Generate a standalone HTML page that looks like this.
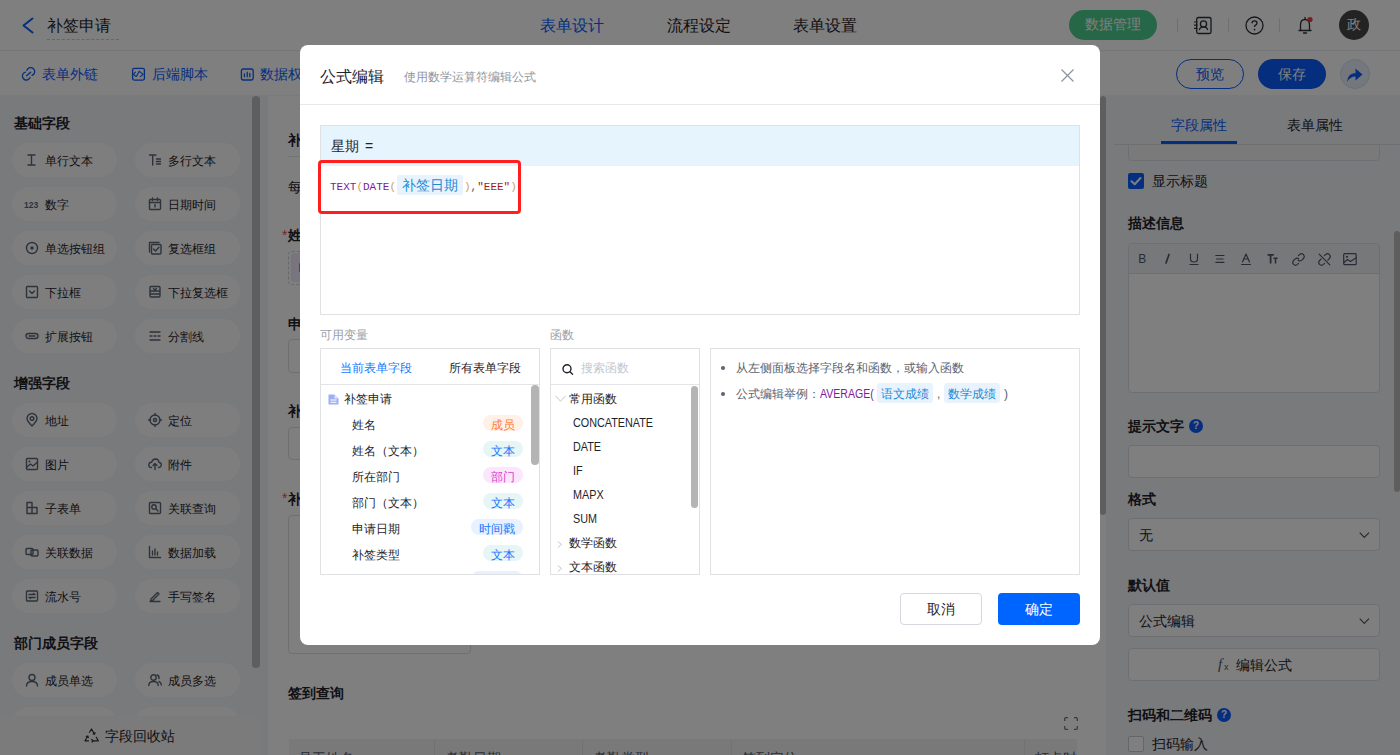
<!DOCTYPE html>
<html><head><meta charset="utf-8">
<style>
*{box-sizing:border-box;margin:0;padding:0}
html,body{width:1400px;height:755px;overflow:hidden;font-family:"Liberation Sans",sans-serif;color:#1f2329;background:#fff}
.a{position:absolute}
.t{position:absolute;white-space:nowrap}
.f12{font-size:12px;line-height:12px}
.f14{font-size:14px;line-height:14px}
.f16{font-size:16px;line-height:16px}
.b{font-weight:bold}
svg{position:absolute;overflow:visible}
.pill{position:absolute;width:105px;height:34px;border-radius:17px;background:#fdfdfe}
.pill .t{left:33px;top:12px;font-size:12px;line-height:12px;color:#1f2329}
.pill svg{left:12px;top:10px}
</style></head><body>
<!-- HEADER -->
<div class="a" style="left:0;top:0;width:1400px;height:51px;background:#fff;border-bottom:1px solid #e6e8eb"></div>
<svg style="left:0;top:0" width="40" height="50"><path d="M32.5 18.5 L23.5 25.5 L32.5 32.5" fill="none" stroke="#0a5cff" stroke-width="2" stroke-linecap="round" stroke-linejoin="round"/></svg>
<div class="t f16" style="left:47px;top:18px;color:#1f2329">补签申请</div>
<div class="a" style="left:47px;top:39px;width:72px;border-top:1px dashed #c9cdd4"></div>
<div class="t f16" style="left:540px;top:18px;color:#0a5cff">表单设计</div>
<div class="t f16" style="left:667px;top:18px">流程设定</div>
<div class="t f16" style="left:793px;top:18px">表单设置</div>
<div class="a" style="left:1069px;top:10px;width:88px;height:30px;border-radius:15px;background:#4dce8e"></div>
<div class="t f14" style="left:1085px;top:17px;color:#fff">数据管理</div>
<div class="a" style="left:1177px;top:18px;width:1px;height:14px;background:#dcdfe6"></div>
<div class="a" style="left:1228px;top:18px;width:1px;height:14px;background:#dcdfe6"></div>
<div class="a" style="left:1279px;top:18px;width:1px;height:14px;background:#dcdfe6"></div>
<!-- contacts icon -->
<svg style="left:1193px;top:16px" width="20" height="20"><rect x="3.7" y="1.5" width="14.3" height="16" rx="1.5" fill="none" stroke="#2b2f36" stroke-width="1.3"/><circle cx="10.5" cy="8" r="3.1" fill="none" stroke="#2b2f36" stroke-width="1.3"/><path d="M6.3 14.2 Q6.8 10.8 10.5 10.8 Q14.2 10.8 14.7 14.2" fill="none" stroke="#2b2f36" stroke-width="1.3"/><path d="M1 6h3.5M1 9.2h3.5M1 12.4h3.5" stroke="#2b2f36" stroke-width="1.2"/></svg>
<!-- help icon -->
<svg style="left:1245px;top:16px" width="20" height="20"><circle cx="9.5" cy="9.5" r="8.5" fill="none" stroke="#2b2f36" stroke-width="1.3"/><path d="M7 7.3 Q7 4.8 9.5 4.8 Q12 4.8 12 7 Q12 8.6 10.2 9.4 Q9.5 9.8 9.5 11" fill="none" stroke="#2b2f36" stroke-width="1.3"/><circle cx="9.5" cy="13.6" r="0.9" fill="#2b2f36"/></svg>
<!-- bell -->
<svg style="left:1296px;top:16px" width="20" height="20"><path d="M3 14.5 H15 M4.5 14.5 V9 Q4.5 3.5 9 3.5 Q13.5 3.5 13.5 9 V14.5 M7.5 17 H10.5 M9 1.5 V3.5" fill="none" stroke="#2b2f36" stroke-width="1.3" stroke-linecap="round"/><circle cx="14" cy="3.5" r="2.6" fill="#f23c3c"/></svg>
<div class="a" style="left:1339px;top:10px;width:30px;height:30px;border-radius:15px;background:#474747"></div>
<div class="t f14" style="left:1347px;top:17px;color:#fff">政</div>

<!-- TOOLBAR -->
<svg style="left:22px;top:67px" width="14" height="14"><path d="M4.9 3.4 A4 4 0 1 1 10 8.4 M8.1 10.6 A4 4 0 1 1 3.3 5.2 M4.6 8.7 L8.7 5.2" fill="none" stroke="#0a5cff" stroke-width="1.3" stroke-linecap="round"/></svg>
<div class="t f14" style="left:42px;top:67px;color:#0a5cff">表单外链</div>
<svg style="left:131px;top:67px" width="14" height="14"><rect x="1.6" y="1.3" width="11.8" height="11.8" rx="1.5" fill="none" stroke="#0a5cff" stroke-width="1.3"/><path d="M4.5 5.2 L2.3 7.4 L5.2 9.5 M5.5 9.3 L8.3 4.2 M9 4.9 L12.2 7.4 L9.3 9.6" fill="none" stroke="#0a5cff" stroke-width="1.1" stroke-linecap="round" stroke-linejoin="round"/></svg>
<div class="t f14" style="left:152px;top:67px;color:#0a5cff">后端脚本</div>
<svg style="left:240px;top:67px" width="14" height="14"><rect x="1.4" y="2" width="11.8" height="11" rx="1.8" fill="none" stroke="#0a5cff" stroke-width="1.3"/><path d="M4.4 7V9.8 M7.2 5.2V9.8 M9.8 6.4V9.8" stroke="#0a5cff" stroke-width="1.3" stroke-linecap="round"/></svg>
<div class="t f14" style="left:260px;top:67px;color:#0a5cff">数据权限</div>
<div class="a" style="left:1176px;top:59px;width:68px;height:30px;border-radius:15px;border:1px solid #0a5cff"></div>
<div class="t f14" style="left:1196px;top:67px;color:#0a5cff">预览</div>
<div class="a" style="left:1258px;top:59px;width:68px;height:30px;border-radius:15px;background:#0a5cff"></div>
<div class="t f14" style="left:1278px;top:67px;color:#fff">保存</div>
<div class="a" style="left:1340px;top:59px;width:30px;height:30px;border-radius:15px;background:#e9effc;border:1px solid #d3def5"></div>
<svg style="left:1346px;top:67px" width="18" height="16"><path d="M1 15 Q1.5 6.5 9.5 6 V1.5 L16.5 7.5 L9.5 13.5 V9.5 Q4 9.5 1 15 Z" fill="#0a5cff"/></svg>

<!-- SIDEBAR -->
<div class="a" style="left:0;top:95px;width:1400px;height:1px;background:#f3f4f6"></div>
<div class="a" style="left:0;top:96px;width:268px;height:659px;background:#f2f4f8"></div>
<div class="a" style="left:252px;top:96px;width:8px;height:572px;border-radius:4px;background:#bcbcbc"></div>
<div class="t f14 b" style="left:14px;top:116px">基础字段</div>
<div class="pill" style="left:12px;top:143px"><svg style="left:13px;top:10px" width="14" height="14"><path d="M3 2H10M3 12H10M6.5 2V12" fill="none" stroke="#5b6676" stroke-width="1.4" stroke-linecap="round" stroke-linejoin="round"/></svg><div class="t">单行文本</div></div>
<div class="pill" style="left:135px;top:143px"><svg style="left:13px;top:10px" width="14" height="14"><path d="M1.5 2H8M4.7 2V12M8.5 6H12.5M8.5 8.5H12.5M8.5 11H12.5" fill="none" stroke="#5b6676" stroke-width="1.4" stroke-linecap="round" stroke-linejoin="round"/></svg><div class="t">多行文本</div></div>
<div class="pill" style="left:12px;top:187px"><svg style="left:13px;top:10px" width="14" height="14"><text x="-1" y="10.5" font-size="8.5" font-weight="bold" fill="#5b6676" font-family="Liberation Sans">123</text></svg><div class="t">数字</div></div>
<div class="pill" style="left:135px;top:187px"><svg style="left:13px;top:10px" width="14" height="14"><rect x="1.5" y="2.5" width="11" height="10" rx="1" fill="none" stroke="#5b6676" stroke-width="1.4" stroke-linecap="round" stroke-linejoin="round"/><path d="M1.5 5.5H12.5M4.5 1V3.5M9.5 1V3.5M7 7.5V10" fill="none" stroke="#5b6676" stroke-width="1.4" stroke-linecap="round" stroke-linejoin="round"/></svg><div class="t">日期时间</div></div>
<div class="pill" style="left:12px;top:231px"><svg style="left:13px;top:10px" width="14" height="14"><circle cx="7" cy="7" r="5.5" fill="none" stroke="#5b6676" stroke-width="1.4" stroke-linecap="round" stroke-linejoin="round"/><circle cx="7" cy="7" r="1.8" fill="#5b6676"/></svg><div class="t">单选按钮组</div></div>
<div class="pill" style="left:135px;top:231px"><svg style="left:13px;top:10px" width="14" height="14"><path d="M1.5 11V1.5H11" fill="none" stroke="#5b6676" stroke-width="1.4" stroke-linecap="round" stroke-linejoin="round"/><rect x="3.5" y="3.5" width="9.5" height="9.5" rx="1" fill="none" stroke="#5b6676" stroke-width="1.4" stroke-linecap="round" stroke-linejoin="round"/><path d="M5.5 8L7.5 10L11 6.3" fill="none" stroke="#5b6676" stroke-width="1.4" stroke-linecap="round" stroke-linejoin="round"/></svg><div class="t">复选框组</div></div>
<div class="pill" style="left:12px;top:275px"><svg style="left:13px;top:10px" width="14" height="14"><rect x="1.5" y="1.5" width="11" height="11" rx="1" fill="none" stroke="#5b6676" stroke-width="1.4" stroke-linecap="round" stroke-linejoin="round"/><path d="M4.5 6L7 8.5L9.5 6" fill="none" stroke="#5b6676" stroke-width="1.4" stroke-linecap="round" stroke-linejoin="round"/></svg><div class="t">下拉框</div></div>
<div class="pill" style="left:135px;top:275px"><svg style="left:13px;top:10px" width="14" height="14"><path d="M2 6V2.5Q2 1.5 3 1.5H11Q12 1.5 12 2.5V6ZM2 6V11Q2 12 3 12H11Q12 12 12 11V6M5.5 3.5L7 5L8.5 3.5M2 9H12" fill="none" stroke="#5b6676" stroke-width="1.4" stroke-linecap="round" stroke-linejoin="round"/></svg><div class="t">下拉复选框</div></div>
<div class="pill" style="left:12px;top:319px"><svg style="left:13px;top:10px" width="14" height="14"><rect x="1" y="4.5" width="12" height="5" rx="2.5" fill="none" stroke="#5b6676" stroke-width="1.4" stroke-linecap="round" stroke-linejoin="round"/><path d="M4 7H10" fill="none" stroke="#5b6676" stroke-width="1.4" stroke-linecap="round" stroke-linejoin="round"/></svg><div class="t">扩展按钮</div></div>
<div class="pill" style="left:135px;top:319px"><svg style="left:13px;top:10px" width="14" height="14"><path d="M2 3H12M2 7H4M6 7H8M10 7H12M2 11H12" fill="none" stroke="#5b6676" stroke-width="1.4" stroke-linecap="round" stroke-linejoin="round"/></svg><div class="t">分割线</div></div>
<div class="pill" style="left:12px;top:403px"><svg style="left:13px;top:10px" width="14" height="14"><path d="M7 13Q2 8 2 5.5A5 5 0 0 1 12 5.5Q12 8 7 13Z" fill="none" stroke="#5b6676" stroke-width="1.4" stroke-linecap="round" stroke-linejoin="round"/><circle cx="7" cy="5.5" r="1.8" fill="none" stroke="#5b6676" stroke-width="1.4" stroke-linecap="round" stroke-linejoin="round"/></svg><div class="t">地址</div></div>
<div class="pill" style="left:135px;top:403px"><svg style="left:13px;top:10px" width="14" height="14"><circle cx="7" cy="7" r="5" fill="none" stroke="#5b6676" stroke-width="1.4" stroke-linecap="round" stroke-linejoin="round"/><circle cx="7" cy="7" r="1.5" fill="none" stroke="#5b6676" stroke-width="1.4" stroke-linecap="round" stroke-linejoin="round"/><path d="M7 0.5V2.5M7 11.5V13.5M0.5 7H2.5M11.5 7H13.5" fill="none" stroke="#5b6676" stroke-width="1.4" stroke-linecap="round" stroke-linejoin="round"/></svg><div class="t">定位</div></div>
<div class="pill" style="left:12px;top:447px"><svg style="left:13px;top:10px" width="14" height="14"><rect x="1.5" y="1.5" width="11" height="11" rx="1" fill="none" stroke="#5b6676" stroke-width="1.4" stroke-linecap="round" stroke-linejoin="round"/><path d="M2 10L5.5 7L8 9L12 5.5" fill="none" stroke="#5b6676" stroke-width="1.4" stroke-linecap="round" stroke-linejoin="round"/><circle cx="4.5" cy="4.5" r="1" fill="#5b6676"/></svg><div class="t">图片</div></div>
<div class="pill" style="left:135px;top:447px"><svg style="left:13px;top:10px" width="14" height="14"><path d="M3.5 10.5Q0.5 10.5 0.8 7.5Q1.2 5 3.7 5.2Q4.5 2 7.5 2Q10.8 2.2 11 5.5Q13.5 5.7 13.3 8Q13 10.5 10.5 10.5M7 6.5V12.5M5 8.5L7 6.5L9 8.5" fill="none" stroke="#5b6676" stroke-width="1.4" stroke-linecap="round" stroke-linejoin="round"/></svg><div class="t">附件</div></div>
<div class="pill" style="left:12px;top:491px"><svg style="left:13px;top:10px" width="14" height="14"><path d="M2 1.5H7V12.5H2ZM7 6.5H12V12.5H7M2 6.5H7" fill="none" stroke="#5b6676" stroke-width="1.4" stroke-linecap="round" stroke-linejoin="round"/></svg><div class="t">子表单</div></div>
<div class="pill" style="left:135px;top:491px"><svg style="left:13px;top:10px" width="14" height="14"><rect x="1.5" y="1.5" width="11" height="11" rx="1" fill="none" stroke="#5b6676" stroke-width="1.4" stroke-linecap="round" stroke-linejoin="round"/><circle cx="6" cy="6" r="2.2" fill="none" stroke="#5b6676" stroke-width="1.4" stroke-linecap="round" stroke-linejoin="round"/><path d="M7.6 7.6L10 10" fill="none" stroke="#5b6676" stroke-width="1.4" stroke-linecap="round" stroke-linejoin="round"/></svg><div class="t">关联查询</div></div>
<div class="pill" style="left:12px;top:535px"><svg style="left:13px;top:10px" width="14" height="14"><rect x="1" y="3.5" width="7" height="6" rx="1" fill="none" stroke="#5b6676" stroke-width="1.4" stroke-linecap="round" stroke-linejoin="round"/><rect x="6" y="5" width="7" height="6" rx="1" fill="none" stroke="#5b6676" stroke-width="1.4" stroke-linecap="round" stroke-linejoin="round"/></svg><div class="t">关联数据</div></div>
<div class="pill" style="left:135px;top:535px"><svg style="left:13px;top:10px" width="14" height="14"><path d="M1.5 1.5V12.5H12.5M4.5 10V6M7 10V4M9.5 10V7" fill="none" stroke="#5b6676" stroke-width="1.4" stroke-linecap="round" stroke-linejoin="round"/></svg><div class="t">数据加载</div></div>
<div class="pill" style="left:12px;top:579px"><svg style="left:13px;top:10px" width="14" height="14"><rect x="1.5" y="2" width="11" height="10" rx="1" fill="none" stroke="#5b6676" stroke-width="1.4" stroke-linecap="round" stroke-linejoin="round"/><path d="M4 5.5H10M4 8.5H10M8.5 4.5L10 5.5M5.5 9.5L4 8.5" fill="none" stroke="#5b6676" stroke-width="1.4" stroke-linecap="round" stroke-linejoin="round"/></svg><div class="t">流水号</div></div>
<div class="pill" style="left:135px;top:579px"><svg style="left:13px;top:10px" width="14" height="14"><path d="M2 12.5H12M3 10L9.5 3.5L11 5L4.5 11.5L2.7 11.8Z" fill="none" stroke="#5b6676" stroke-width="1.4" stroke-linecap="round" stroke-linejoin="round"/></svg><div class="t">手写签名</div></div>
<div class="pill" style="left:12px;top:663px"><svg style="left:13px;top:10px" width="14" height="14"><circle cx="7" cy="4.5" r="3" fill="none" stroke="#5b6676" stroke-width="1.4" stroke-linecap="round" stroke-linejoin="round"/><path d="M1.5 13Q1.5 8.5 7 8.5Q12.5 8.5 12.5 13" fill="none" stroke="#5b6676" stroke-width="1.4" stroke-linecap="round" stroke-linejoin="round"/></svg><div class="t">成员单选</div></div>
<div class="pill" style="left:135px;top:663px"><svg style="left:13px;top:10px" width="14" height="14"><circle cx="5.5" cy="4.5" r="2.7" fill="none" stroke="#5b6676" stroke-width="1.4" stroke-linecap="round" stroke-linejoin="round"/><path d="M0.8 12.5Q0.8 8.5 5.5 8.5Q10.2 8.5 10.2 12.5M9 2Q11.5 2.5 11 5.5M11 8.5Q13.3 9.5 13.3 12" fill="none" stroke="#5b6676" stroke-width="1.4" stroke-linecap="round" stroke-linejoin="round"/></svg><div class="t">成员多选</div></div>
<div class="pill" style="left:12px;top:707px"><svg style="left:13px;top:10px" width="14" height="14"><circle cx="7" cy="4.5" r="3" fill="none" stroke="#5b6676" stroke-width="1.4" stroke-linecap="round" stroke-linejoin="round"/><path d="M1.5 13Q1.5 8.5 7 8.5Q12.5 8.5 12.5 13" fill="none" stroke="#5b6676" stroke-width="1.4" stroke-linecap="round" stroke-linejoin="round"/></svg><div class="t">部门单选</div></div>
<div class="pill" style="left:135px;top:707px"><svg style="left:13px;top:10px" width="14" height="14"><circle cx="5.5" cy="4.5" r="2.7" fill="none" stroke="#5b6676" stroke-width="1.4" stroke-linecap="round" stroke-linejoin="round"/><path d="M0.8 12.5Q0.8 8.5 5.5 8.5Q10.2 8.5 10.2 12.5M9 2Q11.5 2.5 11 5.5M11 8.5Q13.3 9.5 13.3 12" fill="none" stroke="#5b6676" stroke-width="1.4" stroke-linecap="round" stroke-linejoin="round"/></svg><div class="t">部门多选</div></div>
<div class="t f14 b" style="left:14px;top:376px">增强字段</div>
<div class="t f14 b" style="left:14px;top:636px">部门成员字段</div>
<div class="a" style="left:0;top:716px;width:260px;height:39px;background:#f6f7f9"></div>
<div class="t f14" style="left:105px;top:729px;color:#1f2329">字段回收站</div>
<svg style="left:84px;top:728px" width="16" height="16"><path d="M5.5 4.2 L7.5 1 L10.6 6.2 M9.2 5.8 L10.6 6.2 L11 4.6 M9.5 12.8 H14.3 L12.2 9.2 M7.5 11.6 L9.5 12.8 L8 14 M4.5 12.8 H1 L3.8 8 M2.3 8.4 L3.8 8 L4.3 9.6" fill="none" stroke="#2b2f36" stroke-width="1.2" stroke-linecap="round" stroke-linejoin="round"/></svg>

<!-- CANVAS -->
<div class="a" style="left:268px;top:96px;width:838px;height:659px;background:#fff"></div>
<div class="a" style="left:1100px;top:96px;width:6px;height:419px;border-radius:3px;background:#bcbcbc"></div>
<div class="t b" style="left:288px;top:133px;font-size:14px;line-height:14px">补签申请</div>
<div class="a" style="left:288px;top:156px;width:789px;height:1px;background:#e5e6eb"></div>
<div class="t f14" style="left:288px;top:180px;color:#1f2329">每月最多可补签3次</div>
<div class="t f14" style="left:282px;top:228px;color:#f54a45">*</div>
<div class="t f14 b" style="left:288px;top:228px">姓名</div>
<div class="a" style="left:288px;top:251px;width:183px;height:34px;border:1px dashed #d0d3d8;border-radius:4px"></div>
<div class="a" style="left:291px;top:253px;width:90px;height:29px;border-radius:3px;background:#f1ebff"></div>
<div class="a" style="left:299px;top:263px;width:2px;height:9px;border-radius:1px;background:#3bc27c"></div>
<div class="t f14 b" style="left:288px;top:317px">申请日期</div>
<div class="a" style="left:288px;top:339px;width:183px;height:34px;border:1px solid #dcdfe6;border-radius:4px"></div>
<div class="t f14 b" style="left:288px;top:404px">补签类型</div>
<div class="a" style="left:288px;top:427px;width:183px;height:33px;border:1px solid #dcdfe6;border-radius:4px"></div>
<div class="t f14" style="left:282px;top:491px;color:#f54a45">*</div>
<div class="t f14 b" style="left:288px;top:492px">补签理由</div>
<div class="a" style="left:288px;top:515px;width:183px;height:139px;border:1px solid #dcdfe6;border-radius:4px"></div>
<div class="t f14 b" style="left:288px;top:686px">签到查询</div>
<svg style="left:1064px;top:717px" width="14" height="13"><path d="M0.7 4V1.8Q0.7 0.7 1.8 0.7H4M10 0.7H12.2Q13.3 0.7 13.3 1.8V4M13.3 9V11.2Q13.3 12.3 12.2 12.3H10M4 12.3H1.8Q0.7 12.3 0.7 11.2V9" fill="none" stroke="#6b7380" stroke-width="1.2"/></svg>
<div class="a" style="left:289px;top:739px;width:788px;height:40px;background:#f2f3f5;overflow:hidden">
<div class="a" style="left:145px;top:0;width:1px;height:40px;background:#e3e5e9"></div>
<div class="a" style="left:293px;top:0;width:1px;height:40px;background:#e3e5e9"></div>
<div class="a" style="left:442px;top:0;width:1px;height:40px;background:#e3e5e9"></div>
<div class="a" style="left:735px;top:0;width:1px;height:40px;background:#e3e5e9"></div>
<div class="t f14" style="left:9px;top:12px;color:#4e5969">员工姓名</div>
<div class="t f14" style="left:156px;top:12px;color:#4e5969">考勤日期</div>
<div class="t f14" style="left:304px;top:12px;color:#4e5969">考勤类型</div>
<div class="t f14" style="left:453px;top:12px;color:#4e5969">签到定位</div>
<div class="t f14" style="left:746px;top:12px;color:#4e5969">打卡时间</div>
</div>

<!-- RIGHT PANEL -->
<div class="a" style="left:1106px;top:96px;width:294px;height:659px;background:#f2f4f8"></div>
<div class="a" style="left:1128px;top:128px;width:252px;height:33px;border:1px solid #dcdfe6;border-radius:4px;background:#f4f5f7"></div>
<div class="a" style="left:1106px;top:96px;width:288px;height:48px;background:#f2f4f8"></div>
<div class="t f14" style="left:1171px;top:118px;color:#0a5cff">字段属性</div>
<div class="t f14" style="left:1287px;top:118px;color:#1f2329">表单属性</div>
<div class="a" style="left:1161px;top:141px;width:76px;height:3px;background:#0a5cff"></div>
<div class="a" style="left:1114px;top:144px;width:286px;height:1px;background:#dcdfe6"></div>
<div class="a" style="left:1128px;top:173px;width:16px;height:16px;border-radius:2px;background:#0a5cff"></div>
<svg style="left:1128px;top:173px" width="16" height="16"><path d="M3.5 8.2L6.7 11.2L12.5 5" fill="none" stroke="#fff" stroke-width="2" stroke-linecap="round" stroke-linejoin="round"/></svg>
<div class="t f14" style="left:1152px;top:174px">显示标题</div>
<div class="t f14 b" style="left:1128px;top:216px">描述信息</div>
<div class="a" style="left:1128px;top:243px;width:252px;height:150px;border:1px solid #dcdfe6;border-radius:4px;background:#fff;overflow:hidden"><div class="a" style="left:0;top:0;width:250px;height:30px;background:#eff1f5;border-bottom:1px solid #dcdfe6"></div></div>
<svg style="left:1137px;top:253px" width="14" height="13"><text x="1.3" y="10" font-size="12" font-family="Liberation Sans" fill="#4e5969">B</text></svg>
<svg style="left:1163px;top:253px" width="14" height="13"><path d="M6 1.5L3 10" fill="none" stroke="#4e5969" stroke-width="1.7" stroke-linecap="round"/></svg>
<svg style="left:1189px;top:253px" width="14" height="13"><path d="M1.5 1V6Q1.5 9 5 9Q8.5 9 8.5 6V1M1 11.5H9" fill="none" stroke="#4e5969" stroke-width="1.2" stroke-linecap="round" stroke-linejoin="round"/></svg>
<svg style="left:1214px;top:253px" width="14" height="13"><path d="M1.8 2.5H10M2.6 6H9M1.8 9.3H10" fill="none" stroke="#4e5969" stroke-width="1.2" stroke-linecap="round" stroke-linejoin="round" stroke-width="1.3"/></svg>
<svg style="left:1241px;top:253px" width="14" height="13"><path d="M1.5 9L5 1L8.5 9M2.8 6H7.2M0.5 11.5H9.5" fill="none" stroke="#4e5969" stroke-width="1.2" stroke-linecap="round" stroke-linejoin="round"/></svg>
<svg style="left:1267px;top:253px" width="14" height="13"><path d="M0.5 1.8H6.8M3.6 1.8V10.5" fill="none" stroke="#4e5969" stroke-width="1.8"/><path d="M6.5 5.2H10.6M8.5 5.2V10.5" fill="none" stroke="#4e5969" stroke-width="1.5"/></svg>
<svg style="left:1292px;top:253px" width="14" height="13"><path d="M6.5 2.5 L7.5 1.6 Q9.5 -0.2 11.4 1.6 Q13.2 3.5 11.4 5.5 L9.8 7.1 Q8 8.6 6.3 7.2 M6.5 5.8 Q5 4.4 3.2 5.9 L1.6 7.5 Q-0.2 9.5 1.6 11.4 Q3.5 13.2 5.5 11.4 L6.5 10.4" fill="none" stroke="#4e5969" stroke-width="1.2" stroke-linecap="round" stroke-linejoin="round" stroke-width="1.3"/></svg>
<svg style="left:1318px;top:253px" width="14" height="13"><path d="M6.5 2.5 L7.5 1.6 Q9.5 -0.2 11.4 1.6 Q13.2 3.5 11.4 5.5 L9.8 7.1 M3.2 5.9 L1.6 7.5 Q-0.2 9.5 1.6 11.4 Q3.5 13.2 5.5 11.4 L6.5 10.4 M1.2 1.2 L11.8 11.8" fill="none" stroke="#4e5969" stroke-width="1.2" stroke-linecap="round" stroke-linejoin="round" stroke-width="1.3"/></svg>
<svg style="left:1343px;top:253px" width="14" height="13"><rect x="0.7" y="0.7" width="12.5" height="11" rx="1" fill="none" stroke="#4e5969" stroke-width="1.2" stroke-linecap="round" stroke-linejoin="round" stroke-width="1.3"/><path d="M1 9.5L4.5 6.5L7.5 8.5L12.8 5" fill="none" stroke="#4e5969" stroke-width="1.2" stroke-linecap="round" stroke-linejoin="round"/><circle cx="4" cy="3.8" r="1.1" fill="#4e5969"/></svg>
<div class="a" style="left:1394px;top:231px;width:6px;height:261px;border-radius:3px;background:#bcbcbc"></div>
<div class="t f14 b" style="left:1128px;top:419px">提示文字</div>
<div class="a" style="left:1189px;top:419px;width:14px;height:14px;border-radius:7px;background:#0a5cff"></div><div class="t b" style="left:1189px;top:421px;width:14px;text-align:center;font-size:10px;line-height:10px;color:#fff">?</div>
<div class="a" style="left:1128px;top:445px;width:252px;height:33px;border:1px solid #dcdfe6;border-radius:4px;background:#fff"></div>
<div class="t f14 b" style="left:1128px;top:492px">格式</div>
<div class="a" style="left:1128px;top:518px;width:252px;height:33px;border:1px solid #dcdfe6;border-radius:4px;background:#fff"></div>
<div class="t f14" style="left:1139px;top:528px">无</div>
<svg style="left:1359px;top:532px" width="11" height="7"><path d="M0.7 0.7L5.3 5.5L10 0.7" fill="none" stroke="#4e5969" stroke-width="1.2"/></svg>
<div class="t f14 b" style="left:1128px;top:578px">默认值</div>
<div class="a" style="left:1128px;top:604px;width:252px;height:33px;border:1px solid #dcdfe6;border-radius:4px;background:#fff"></div>
<div class="t f14" style="left:1139px;top:614px">公式编辑</div>
<svg style="left:1359px;top:618px" width="11" height="7"><path d="M0.7 0.7L5.3 5.5L10 0.7" fill="none" stroke="#4e5969" stroke-width="1.2"/></svg>
<div class="a" style="left:1128px;top:648px;width:252px;height:33px;border:1px solid #dcdfe6;border-radius:4px;background:#fff"></div>
<div class="t" style="left:1218px;top:657px;font-family:'Liberation Serif',serif;font-style:italic;font-size:15px;line-height:15px;color:#4e5969">f</div>
<div class="t" style="left:1224px;top:663px;font-family:'Liberation Sans',sans-serif;font-size:9px;line-height:9px;color:#4e5969">x</div>
<div class="t f14" style="left:1236px;top:658px">编辑公式</div>
<div class="t f14 b" style="left:1128px;top:708px">扫码和二维码</div>
<div class="a" style="left:1217px;top:708px;width:14px;height:14px;border-radius:7px;background:#0a5cff"></div><div class="t b" style="left:1217px;top:710px;width:14px;text-align:center;font-size:10px;line-height:10px;color:#fff">?</div>
<div class="a" style="left:1128px;top:736px;width:16px;height:16px;border-radius:2px;border:1px solid #c9cdd4;background:#fff"></div>
<div class="t f14" style="left:1152px;top:737px">扫码输入</div>

<!-- OVERLAY -->
<div class="a" style="left:0;top:0;width:1400px;height:755px;background:rgba(0,0,0,0.5)"></div>

<!-- MODAL -->
<div class="a" style="left:300px;top:45px;width:800px;height:600px;background:#fff;border-radius:8px"></div>
<div class="t f16" style="left:320px;top:69px;color:#1f2329">公式编辑</div>
<div class="t f12" style="left:404px;top:71px;color:#8f959e">使用数学运算符编辑公式</div>
<div class="a" style="left:300px;top:104px;width:800px;height:1px;background:#e8e9eb"></div>
<svg style="left:1061px;top:69px" width="13" height="13"><path d="M0.5 0.5L12.5 12.5M12.5 0.5L0.5 12.5" stroke="#8f959e" stroke-width="1.3"/></svg>
<div class="a" style="left:320px;top:125px;width:760px;height:190px;border:1px solid #e0e1e3"></div>
<div class="a" style="left:321px;top:126px;width:758px;height:40px;background:#e6f4fe"></div>
<div class="t f14" style="left:331px;top:139px;color:#1f2329">星期 <span style="margin-left:2px">=</span></div>
<div class="t" style="left:330px;top:182px;font-family:'Liberation Mono',monospace;font-size:11px;line-height:11px"><span style="color:#7c1b9c">TEXT</span><span style="color:#c9a15f">(</span><span style="color:#7c1b9c">DATE</span><span style="color:#c9a15f">(</span></div>
<div class="a" style="left:397px;top:175px;width:66px;height:20px;background:#e9f3fd;border-radius:2px"></div>
<div class="t f14" style="left:402px;top:178px;color:#1b8ad6">补签日期</div>
<div class="t" style="left:464px;top:182px;font-family:'Liberation Mono',monospace;font-size:11px;line-height:11px"><span style="color:#c9a15f">)</span><span style="color:#555">,</span><span style="color:#a31a1a">"EEE"</span><span style="color:#c9a15f">)</span></div>
<div class="a" style="left:318px;top:160px;width:203px;height:54px;border:3px solid #ff1f1f;border-radius:4px"></div>
<div class="t f12" style="left:320px;top:329px;color:#999ea8">可用变量</div>
<div class="t f12" style="left:550px;top:329px;color:#999ea8">函数</div>
<div class="a" style="left:320px;top:348px;width:220px;height:227px;border:1px solid #e0e1e3;overflow:hidden"><div class="a" style="left:0;top:35px;width:218px;height:1px;background:#e2e4e8"></div><div class="t f12" style="left:19px;top:13px;color:#1677ff">当前表单字段</div><div class="t f12" style="left:128px;top:13px;color:#1f2329">所有表单字段</div><svg style="left:7px;top:45px" width="11" height="11"><path d="M0.5 0.5H6.5L10.5 4.5V10.5H0.5Z" fill="#9eb0f5"/><path d="M2.5 6H8.5M2.5 8.3H8.5" stroke="#fff" stroke-width="1"/><path d="M6.5 0.5V4.5H10.5" fill="#dfe5fd"/></svg><div class="t f12" style="left:23px;top:44px;color:#1f2329">补签申请</div>
<div class="t f12" style="left:31px;top:70px;color:#1f2329">姓名</div>
<div class="a" style="left:162px;top:66px;width:40px;height:16px;border-radius:8px;background:#fff0e8"></div>
<div class="t f12" style="left:162px;width:40px;text-align:center;top:70px;color:#ff7d33">成员</div>
<div class="t f12" style="left:31px;top:96px;color:#1f2329">姓名（文本）</div>
<div class="a" style="left:162px;top:92px;width:40px;height:16px;border-radius:8px;background:#e6f6f6"></div>
<div class="t f12" style="left:162px;width:40px;text-align:center;top:96px;color:#1677ff">文本</div>
<div class="t f12" style="left:31px;top:122px;color:#1f2329">所在部门</div>
<div class="a" style="left:162px;top:118px;width:40px;height:16px;border-radius:8px;background:#fce6fb"></div>
<div class="t f12" style="left:162px;width:40px;text-align:center;top:122px;color:#d43fd0">部门</div>
<div class="t f12" style="left:31px;top:148px;color:#1f2329">部门（文本）</div>
<div class="a" style="left:162px;top:144px;width:40px;height:16px;border-radius:8px;background:#e6f6f6"></div>
<div class="t f12" style="left:162px;width:40px;text-align:center;top:148px;color:#1677ff">文本</div>
<div class="t f12" style="left:31px;top:174px;color:#1f2329">申请日期</div>
<div class="a" style="left:150px;top:170px;width:52px;height:16px;border-radius:8px;background:#e8f1ff"></div>
<div class="t f12" style="left:150px;width:52px;text-align:center;top:174px;color:#1677ff">时间戳</div>
<div class="t f12" style="left:31px;top:200px;color:#1f2329">补签类型</div>
<div class="a" style="left:162px;top:196px;width:40px;height:16px;border-radius:8px;background:#e6f6f6"></div>
<div class="t f12" style="left:162px;width:40px;text-align:center;top:200px;color:#1677ff">文本</div>
<div class="t f12" style="left:31px;top:226px;color:#1f2329">补签时间</div>
<div class="a" style="left:150px;top:222px;width:52px;height:16px;border-radius:8px;background:#e8f1ff"></div>
<div class="t f12" style="left:150px;width:52px;text-align:center;top:226px;color:#1677ff">时间戳</div>
<div class="a" style="left:210px;top:36px;width:8px;height:80px;border-radius:4px;background:#b4b4b4"></div>
</div>
<div class="a" style="left:550px;top:348px;width:150px;height:227px;border:1px solid #e0e1e3;overflow:hidden"><div class="a" style="left:0;top:35px;width:148px;height:1px;background:#e2e4e8"></div><svg style="left:11px;top:15px" width="12" height="12"><circle cx="5" cy="4.8" r="4" fill="none" stroke="#1f2329" stroke-width="1.4"/><path d="M8 7.8L10.5 10.3" stroke="#1f2329" stroke-width="1.4" stroke-linecap="round"/></svg><div class="t f12" style="left:30px;top:13px;color:#c3c7cf">搜索函数</div><svg style="left:4px;top:46px" width="12" height="8"><path d="M0.5 0.8L5.5 6.2L10.5 0.8" fill="none" stroke="#c3c7cf" stroke-width="1"/></svg><div class="t f12" style="left:18px;top:44px;color:#1f2329">常用函数</div>
<div class="t f12" style="left:22px;top:68px;color:#1f2329;transform:scaleX(0.9);transform-origin:0 0">CONCATENATE</div>
<div class="t f12" style="left:22px;top:92px;color:#1f2329;transform:scaleX(0.9);transform-origin:0 0">DATE</div>
<div class="t f12" style="left:22px;top:116px;color:#1f2329;transform:scaleX(0.9);transform-origin:0 0">IF</div>
<div class="t f12" style="left:22px;top:140px;color:#1f2329;transform:scaleX(0.9);transform-origin:0 0">MAPX</div>
<div class="t f12" style="left:22px;top:164px;color:#1f2329;transform:scaleX(0.9);transform-origin:0 0">SUM</div>
<svg style="left:6px;top:192px" width="6" height="8"><path d="M0.8 0.5L4.5 3.5L0.8 6.5" fill="none" stroke="#c3c7cf" stroke-width="1"/></svg>
<div class="t f12" style="left:18px;top:188px;color:#1f2329">数学函数</div>
<svg style="left:6px;top:216px" width="6" height="8"><path d="M0.8 0.5L4.5 3.5L0.8 6.5" fill="none" stroke="#c3c7cf" stroke-width="1"/></svg>
<div class="t f12" style="left:18px;top:212px;color:#1f2329">文本函数</div>
<div class="a" style="left:140px;top:37px;width:7px;height:122px;border-radius:4px;background:#b4b4b4"></div>
</div>
<div class="a" style="left:710px;top:348px;width:370px;height:227px;border:1px solid #e0e1e3"></div>
<div class="a" style="left:721px;top:366px;width:4px;height:4px;border-radius:2px;background:#5a6372"></div>
<div class="a" style="left:721px;top:392px;width:4px;height:4px;border-radius:2px;background:#5a6372"></div>
<div class="t f12" style="left:736px;top:362px;color:#5a6372">从左侧面板选择字段名和函数，或输入函数</div>
<div class="t f12" style="left:736px;top:388px;color:#5a6372">公式编辑举例：<span style="color:#7c1b9c;display:inline-block;transform:scaleX(0.88);transform-origin:0 0">AVERAGE(</span></div>
<div class="a" style="left:877px;top:383px;width:56px;height:20px;border-radius:3px;background:#e9f3fd"></div>
<div class="t f12" style="left:881px;top:388px;color:#1b8ad6">语文成绩</div>
<div class="t f12" style="left:937px;top:388px;color:#5a6372">,</div>
<div class="a" style="left:944px;top:383px;width:56px;height:20px;border-radius:3px;background:#e9f3fd"></div>
<div class="t f12" style="left:948px;top:388px;color:#1b8ad6">数学成绩</div>
<div class="t f12" style="left:1004px;top:388px;color:#5a6372">)</div>
<div class="a" style="left:900px;top:593px;width:82px;height:32px;border:1px solid #d4d7dd;border-radius:4px;background:#fff"></div>
<div class="t f14" style="left:927px;top:602px;color:#1f2329">取消</div>
<div class="a" style="left:998px;top:593px;width:82px;height:32px;border-radius:4px;background:#0064ff"></div>
<div class="t f14" style="left:1025px;top:602px;color:#fff">确定</div>
</body></html>
